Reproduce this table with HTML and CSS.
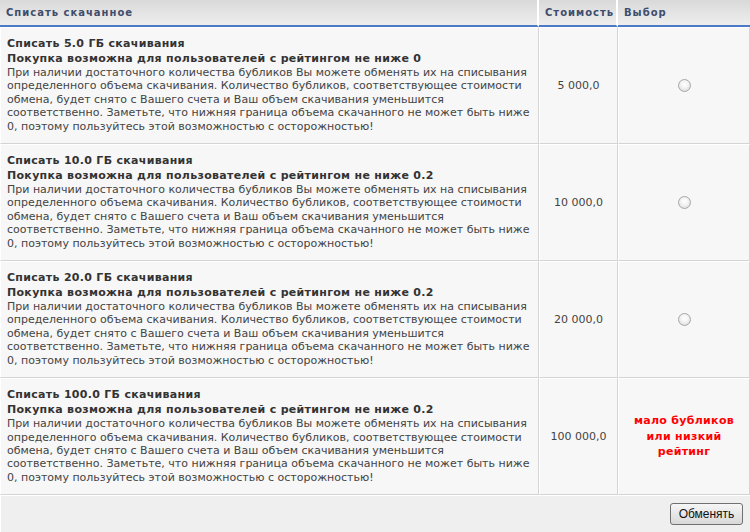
FILE: index.html
```html
<!DOCTYPE html>
<html lang="ru">
<head>
<meta charset="utf-8">
<title>Списать скачанное</title>
<link rel="stylesheet" href="styles.css">
</head>
<body>
<table class="grid">
  <colgroup>
    <col class="c-desc">
    <col class="c-cost">
    <col class="c-pick">
  </colgroup>
  <thead>
    <tr>
      <th class="h-desc">Списать скачанное</th>
      <th class="h-cost">Стоимость</th>
      <th class="h-pick">Выбор</th>
    </tr>
  </thead>
  <tbody>
    <tr>
      <td class="desc">
        <div class="title">Списать 5.0 ГБ скачивания</div>
        <div class="title">Покупка возможна для пользователей с рейтингом не ниже 0</div>
        <div class="text">При наличии достаточного количества бубликов Вы можете обменять их на списывания определенного объема скачивания. Количество бубликов, соответствующее стоимости обмена, будет снято с Вашего счета и Ваш объем скачивания уменьшится соответственно. Заметьте, что нижняя граница объема скачанного не может быть ниже 0, поэтому пользуйтесь этой возможностью с осторожностью!</div>
      </td>
      <td class="cost">5 000,0</td>
      <td class="pick"><input class="radio" type="radio" name="pick"></td>
    </tr>
    <tr>
      <td class="desc">
        <div class="title">Списать 10.0 ГБ скачивания</div>
        <div class="title">Покупка возможна для пользователей с рейтингом не ниже 0.2</div>
        <div class="text">При наличии достаточного количества бубликов Вы можете обменять их на списывания определенного объема скачивания. Количество бубликов, соответствующее стоимости обмена, будет снято с Вашего счета и Ваш объем скачивания уменьшится соответственно. Заметьте, что нижняя граница объема скачанного не может быть ниже 0, поэтому пользуйтесь этой возможностью с осторожностью!</div>
      </td>
      <td class="cost">10 000,0</td>
      <td class="pick"><input class="radio" type="radio" name="pick"></td>
    </tr>
    <tr>
      <td class="desc">
        <div class="title">Списать 20.0 ГБ скачивания</div>
        <div class="title">Покупка возможна для пользователей с рейтингом не ниже 0.2</div>
        <div class="text">При наличии достаточного количества бубликов Вы можете обменять их на списывания определенного объема скачивания. Количество бубликов, соответствующее стоимости обмена, будет снято с Вашего счета и Ваш объем скачивания уменьшится соответственно. Заметьте, что нижняя граница объема скачанного не может быть ниже 0, поэтому пользуйтесь этой возможностью с осторожностью!</div>
      </td>
      <td class="cost">20 000,0</td>
      <td class="pick"><input class="radio" type="radio" name="pick"></td>
    </tr>
    <tr>
      <td class="desc">
        <div class="title">Списать 100.0 ГБ скачивания</div>
        <div class="title">Покупка возможна для пользователей с рейтингом не ниже 0.2</div>
        <div class="text">При наличии достаточного количества бубликов Вы можете обменять их на списывания определенного объема скачивания. Количество бубликов, соответствующее стоимости обмена, будет снято с Вашего счета и Ваш объем скачивания уменьшится соответственно. Заметьте, что нижняя граница объема скачанного не может быть ниже 0, поэтому пользуйтесь этой возможностью с осторожностью!</div>
      </td>
      <td class="cost">100 000,0</td>
      <td class="pick"><span class="warn">мало бубликов<br>или низкий<br>рейтинг</span></td>
    </tr>
  </tbody>
  <tfoot>
    <tr>
      <td class="foot" colspan="3"><button class="btn" type="button">Обменять</button></td>
    </tr>
  </tfoot>
</table>
</body>
</html>
```

FILE: styles.css
```css
html, body {
  margin: 0;
  padding: 0;
  background: #ffffff;
}

body {
  font-family: "DejaVu Sans", Verdana, sans-serif;
  font-size: 11px;
  color: #333333;
}

.grid {
  width: 750px;
  border-collapse: separate;
  border-spacing: 0;
  table-layout: fixed;
}

.c-desc { width: 539px; }
.c-cost { width: 79px; }
.c-pick { width: 132px; }

.grid th {
  height: 27px;
  padding: 0 6px;
  text-align: left;
  font-weight: bold;
  font-size: 10px;
  letter-spacing: 1px;
  color: #3e4d6c;
  background: linear-gradient(#d9d9d9, #eeeeee);
  border-bottom: 2px solid #4b7bc6;
  border-right: 2px solid #ffffff;
  box-sizing: border-box;
}

.grid th.h-pick {
  border-right: none;
}

.grid td {
  background: #f7f7f7;
  border-top: 1px solid #ffffff;
  border-left: 1px solid #ffffff;
  border-right: 1px solid #d4d4d4;
  border-bottom: 1px solid #d4d4d4;
  vertical-align: middle;
}

.desc {
  padding: 8px 6px 10px 6px;
  color: #444444;
}

.title {
  font-weight: bold;
  font-size: 11px;
  letter-spacing: 0.3px;
  line-height: 15px;
  color: #333333;
}

.text {
  line-height: 13.4px;
}

.cost {
  text-align: center;
  color: #444444;
}

.pick {
  text-align: center;
}

.radio {
  appearance: none;
  -webkit-appearance: none;
  width: 13px;
  height: 13px;
  margin: 0;
  border-radius: 50%;
  border: 1px solid #a8a8a8;
  background: radial-gradient(circle at 50% 40%, #ffffff 0%, #f4f4f4 40%, #d2d2d2 100%);
  box-sizing: border-box;
  vertical-align: middle;
}

.warn {
  display: inline-block;
  font-weight: bold;
  letter-spacing: 0.3px;
  color: #ff0000;
  line-height: 15.5px;
}

.grid td.foot {
  height: 37px;
  padding: 7px 7px 0 0;
  box-sizing: border-box;
  vertical-align: top;
  text-align: right;
  background: #efefef;
  border-right: none;
  border-bottom: none;
}

.btn {
  width: 73px;
  height: 22px;
  padding: 0;
  font-family: "Liberation Sans", Arial, sans-serif;
  font-size: 12px;
  color: #111111;
  background: linear-gradient(#f6f6f6, #e4e4e4 60%, #d8d8d8);
  border: 1px solid #707070;
  border-radius: 3px;
}
```
